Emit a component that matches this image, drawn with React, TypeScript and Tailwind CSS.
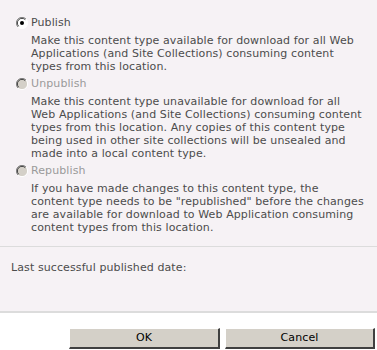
const font = { fontFamily: '"DejaVu Sans", Verdana, sans-serif' };

interface OptionProps {
  label: string;
  lines: string[];
  checked?: boolean;
  disabled?: boolean;
}

const Radio: React.FC<{ checked?: boolean; disabled?: boolean }> = ({ checked, disabled }) => (
  <svg width="12" height="12" viewBox="0 0 12 12" className="shrink-0">
    <circle cx="6" cy="6" r="5.5" fill={disabled ? '#d4d0c8' : '#ffffff'} />
    <path d="M10 2 A5.5 5.5 0 0 0 2 10" fill="none" stroke="#808080" strokeWidth="1" />
    <path d="M9.3 2.7 A4.5 4.5 0 0 0 2.7 9.3" fill="none" stroke="#404040" strokeWidth="1" />
    <path d="M2 10 A5.5 5.5 0 0 0 10 2" fill="none" stroke="#ffffff" strokeWidth="1" />
    {checked && <circle cx="6" cy="6" r="2" fill="#000000" />}
  </svg>
);

const Option: React.FC<OptionProps> = ({ label, lines, checked, disabled }) => (
  <div className="flex flex-col">
    <div className="flex items-center h-[16px]">
      <div className="w-[17px] pl-[2px]">
        <Radio checked={checked} disabled={disabled} />
      </div>
      <span className={disabled ? 'text-[#9a9a9a]' : 'text-[#4c4c4c]'}>{label}</span>
    </div>
    <div className="pl-[17px] pt-[3px] text-[#4c4c4c] leading-[13px] whitespace-nowrap">
      {lines.map((l) => (
        <div key={l}>{l}</div>
      ))}
    </div>
  </div>
);

export default function App() {
  return (
    <div className="w-[377px] h-[350px] bg-white text-[11px] tracking-[0.1px] flex flex-col" style={font}>
      <div className="bg-[#f6f2f5] pl-[14px] pt-[15px] h-[247px] flex flex-col gap-[3px] border-b border-[#dcdcdc]">
        <Option
          checked
          label="Publish"
          lines={[
            'Make this content type available for download for all Web',
            'Applications (and Site Collections) consuming content',
            'types from this location.',
          ]}
        />
        <Option
          disabled
          label="Unpublish"
          lines={[
            'Make this content type unavailable for download for all',
            'Web Applications (and Site Collections) consuming content',
            'types from this location. Any copies of this content type',
            'being used in other site collections will be unsealed and',
            'made into a local content type.',
          ]}
        />
        <Option
          disabled
          label="Republish"
          lines={[
            'If you have made changes to this content type, the',
            'content type needs to be "republished" before the changes',
            'are available for download to Web Application consuming',
            'content types from this location.',
          ]}
        />
      </div>
      <div className="bg-[#f6f2f5] h-[66px] pl-[11px] pt-[13px] text-[#4c4c4c] border-b-2 border-[#dcdcdc]">
        Last successful published date:
      </div>
      <div className="flex justify-end gap-[5px] pr-[2px] pt-[15px]">
        <button className="w-[151px] h-[21px] bg-[#d4d0c8] border-t border-l border-t-white border-l-white border-b-2 border-r-2 border-b-[#404040] border-r-[#404040] text-black text-[11px]" style={font}>
          OK
        </button>
        <button className="w-[150px] h-[21px] bg-[#d4d0c8] border-t border-l border-t-white border-l-white border-b-2 border-r-2 border-b-[#404040] border-r-[#404040] text-black text-[11px]" style={font}>
          Cancel
        </button>
      </div>
    </div>
  );
}
